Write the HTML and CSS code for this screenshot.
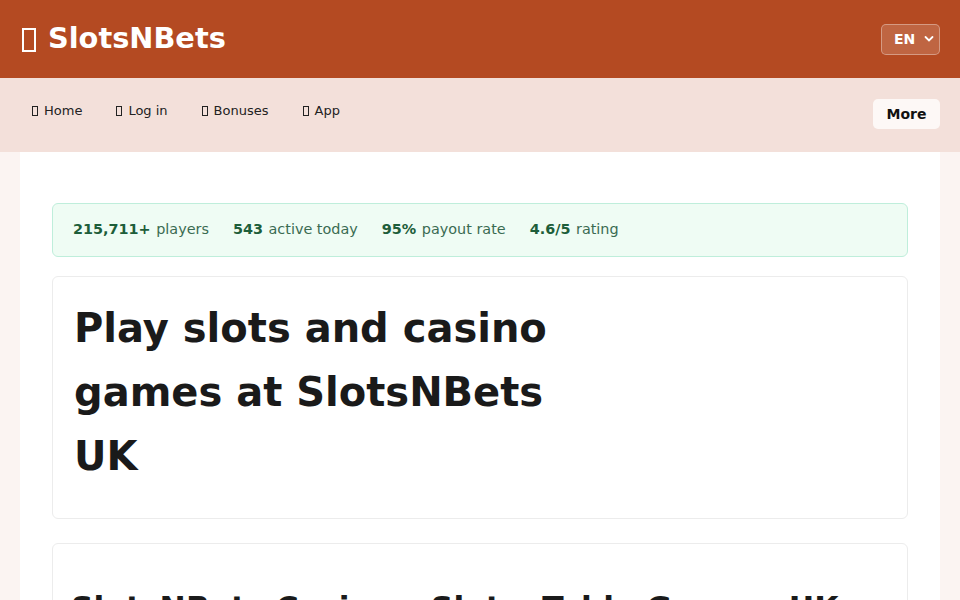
FILE: index.html
```html
<!DOCTYPE html>
<html lang="en">
<head>
<meta charset="utf-8">
<title>SlotsNBets</title>
<link rel="stylesheet" href="styles.css">
</head>
<body>
<header class="topbar">
  <div class="logo"><span class="tofu tofu-lg"></span>SlotsNBets</div>
  <div class="lang">EN <svg class="chev" width="10" height="8" viewBox="0 0 10 8"><path d="M1.5 2 L5 5.5 L8.5 2" fill="none" stroke="#fff" stroke-width="1.8" stroke-linecap="round"/></svg></div>
</header>
<nav class="navbar">
  <ul class="navlist">
    <li class="navitem"><span class="tofu"></span>Home</li>
    <li class="navitem"><span class="tofu"></span>Log in</li>
    <li class="navitem"><span class="tofu"></span>Bonuses</li>
    <li class="navitem"><span class="tofu"></span>App</li>
  </ul>
  <button class="more">More</button>
</nav>
<main class="wrap">
  <div class="stats">
    <span class="stat"><b>215,711+</b> players</span>
    <span class="stat"><b>543</b> active today</span>
    <span class="stat"><b>95%</b> payout rate</span>
    <span class="stat"><b>4.6/5</b> rating</span>
  </div>
  <section class="card hero">
    <h1 class="hero-title">Play slots and casino games at SlotsNBets UK</h1>
  </section>
  <section class="card info">
    <h2 class="info-title">SlotsNBets Casino – Slots, Table Games, UK</h2>
  </section>
</main>
</body>
</html>
```
FILE: styles.css
```css
* { box-sizing: border-box; }
html, body { margin: 0; padding: 0; }
body {
  font-family: "DejaVu Sans", sans-serif;
  background: #fbf4f2;
  color: #1a1a1a;
  overflow: hidden;
  height: 600px;
}
.tofu {
  display: inline-block;
  width: 6px;
  height: 10px;
  border: 1px solid currentColor;
  margin-right: 6px;
  vertical-align: -1px;
}
.tofu-lg {
  width: 14px;
  height: 24px;
  border-width: 2px;
  margin-right: 12px;
  vertical-align: -4px;
}
.topbar {
  height: 78px;
  background: #b44a22;
  display: flex;
  align-items: center;
  justify-content: space-between;
  padding: 0 20px 0 22px;
}
.logo {
  color: #fff;
  font-weight: bold;
  font-size: 28.8px;
  padding-bottom: 2px;
}
.lang {
  width: 59px;
  height: 31px;
  border: 1px solid rgba(255,255,255,0.35);
  background: rgba(255,255,255,0.15);
  border-radius: 5px;
  color: #fff;
  font-weight: bold;
  font-size: 14px;
  display: flex;
  align-items: center;
  padding-left: 12px;
  gap: 9px;
}
.navbar {
  height: 74px;
  background: #f3e0da;
  display: flex;
  justify-content: space-between;
  align-items: flex-start;
  padding: 0 20px 0 16px;
}
.navlist {
  list-style: none;
  margin: 0;
  padding: 24px 0 0;
  display: flex;
  gap: 2px;
}
.navitem {
  padding: 0 16px;
  font-size: 13px;
  color: #222;
  line-height: 18px;
}
.more {
  margin-top: 21px;
  height: 30px;
  width: 67px;
  border: none;
  background: #fdf8f6;
  border-radius: 5px;
  font-family: "DejaVu Sans", sans-serif;
  font-weight: bold;
  font-size: 14px;
  color: #111;
  padding: 0;
}
.wrap {
  margin: 0 20px;
  background: #fff;
  padding: 51px 32px 0;
  min-height: 448px;
}
.stats {
  background: #effcf4;
  border: 1px solid #bfeedb;
  border-radius: 6px;
  height: 54px;
  display: flex;
  align-items: center;
  padding: 0 20px 2px;
  gap: 24px;
  font-size: 14.4px;
  color: #3a6b52;
}
.stat b { color: #1d5e3a; margin-right: 1px; }
.card {
  border: 1px solid #ececec;
  border-radius: 6px;
  background: #fff;
}
.hero {
  margin-top: 19px;
  padding: 19px 22px 30px 21px;
}
.hero-title {
  margin: 0;
  max-width: 500px;
  font-size: 40px;
  line-height: 64px;
  font-weight: bold;
  color: #1a1a1a;
}
.info {
  margin-top: 24px;
  padding: 44px 18px 0;
  height: 100px;
}
.info-title {
  margin: 0;
  font-size: 31.4px;
  line-height: 40px;
  font-weight: bold;
  color: #1a1a1a;
  white-space: nowrap;
}
```
